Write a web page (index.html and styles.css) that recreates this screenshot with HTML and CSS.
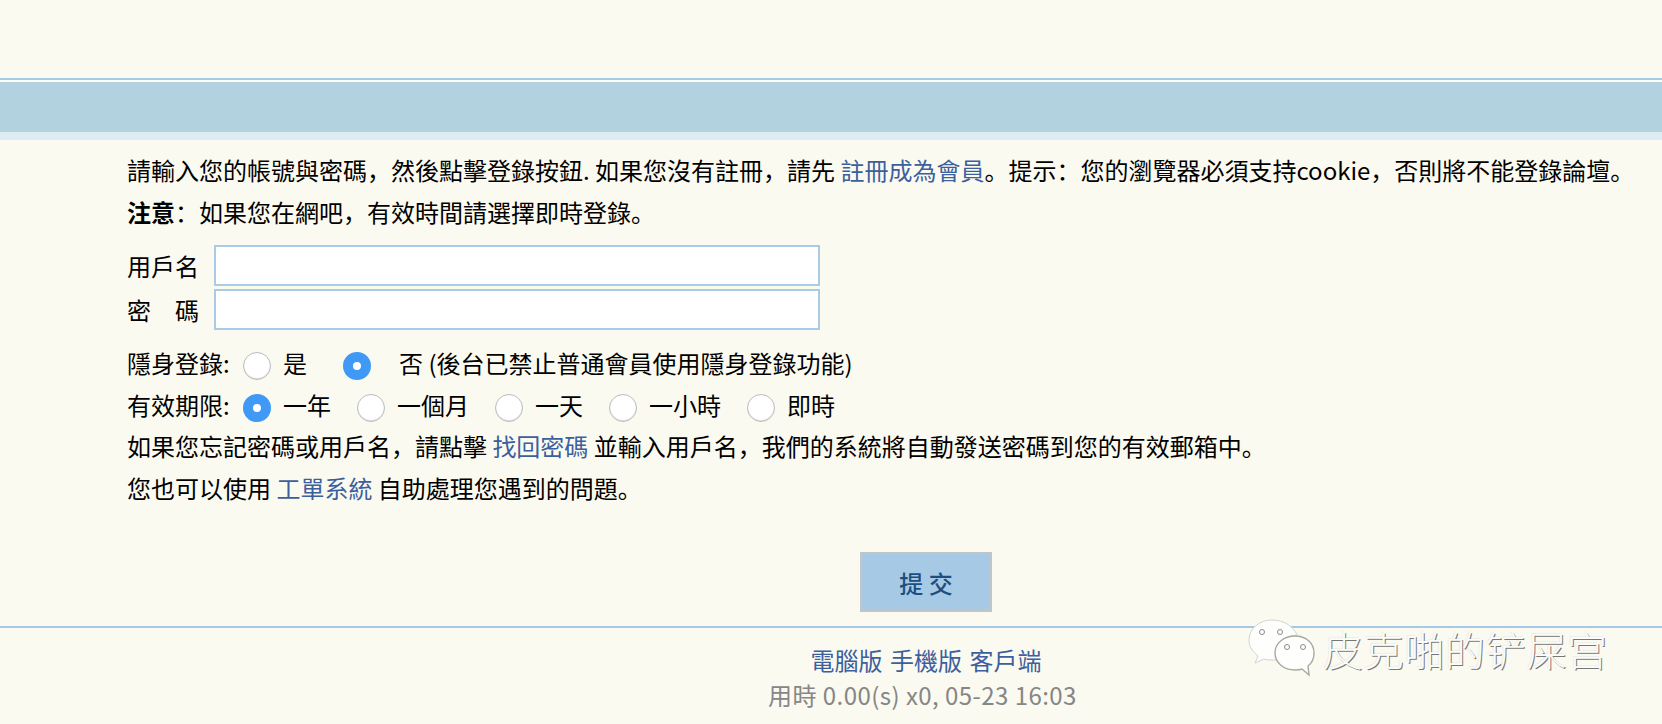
FILE: index.html
```html
<!DOCTYPE html>
<html lang="zh">
<head>
    <meta charset="UTF-8">
    <meta name="viewport" content="width=device-width, initial-scale=1.0">
    <title>登錄</title>
    <link rel="stylesheet" href="styles.css">
</head>
<body>
    <div class="top-bar"><div class="top-band"></div></div>

    <form class="login">
        <p class="line">請輸入您的帳號與密碼，然後點擊登錄按鈕. 如果您沒有註冊，請先 <a href="#">註冊成為會員</a>。提示：您的瀏覽器必須支持cookie，否則將不能登錄論壇。</p>
        <p class="line"><b>注意</b>：如果您在網吧，有效時間請選擇即時登錄。</p>

        <div class="fields">
            <label class="field"><span class="field-name">用戶名</span><input type="text"></label>
            <label class="field"><span class="field-name">密碼</span><input type="password"></label>
        </div>

        <div class="options">
            <span class="options-name">隱身登錄:</span>
            <label class="option option-wide"><input type="radio" name="hide">是</label>
            <label class="option option-far"><input type="radio" name="hide" checked>否 (後台已禁止普通會員使用隱身登錄功能)</label>
        </div>
        <div class="options">
            <span class="options-name">有效期限:</span>
            <label class="option"><input type="radio" name="expire" checked>一年</label>
            <label class="option"><input type="radio" name="expire">一個月</label>
            <label class="option"><input type="radio" name="expire">一天</label>
            <label class="option"><input type="radio" name="expire">一小時</label>
            <label class="option"><input type="radio" name="expire">即時</label>
        </div>

        <p class="line">如果您忘記密碼或用戶名，請點擊 <a href="#">找回密碼</a> 並輸入用戶名，我們的系統將自動發送密碼到您的有效郵箱中。</p>
        <p class="line">您也可以使用 <a href="#">工單系統</a> 自助處理您遇到的問題。</p>

        <div class="submit-row"><button type="button" class="submit">提 交</button></div>
    </form>

    <div class="footer">
        <div class="footer-links"><a href="#">電腦版</a> <a href="#">手機版</a> <a href="#">客戶端</a></div>
        <div class="footer-time">用時 0.00(s) x0, 05-23 16:03</div>
    </div>

    <div class="watermark">
        <svg class="watermark-logo" width="70" height="62" viewBox="0 0 70 62">
            <path d="M26 2C13 2 3 11 3 22c0 7 4 12 9 16l-3 7 9-4c3 1 5 1 8 1 2 0 4 0 5-1-1-2-1-4-1-6 0-10 9-17 21-18C48 9 38 2 26 2z" fill="#fefefc" stroke="#d4d4cf"/>
            <path d="M49 18c-11 0-20 7-20 17s9 17 20 17c2 0 5 0 7-1l7 6-1-9c4-3 6-8 6-13 0-10-8-17-19-17z" fill="#fefefc" stroke="#a9a9a4" stroke-width="1.4"/>
            <circle cx="16" cy="14" r="2.5" fill="#fff" stroke="#8a8a86"/>
            <circle cx="34" cy="14" r="2.5" fill="#fff" stroke="#8a8a86"/>
            <circle cx="41" cy="29" r="2.5" fill="#fff" stroke="#8a8a86"/>
            <circle cx="57" cy="29" r="2.5" fill="#fff" stroke="#8a8a86"/>
        </svg>
        <span class="watermark-text">皮克啪的铲屎宫</span>
    </div>
</body>
</html>
```

FILE: styles.css
```css
* {
    box-sizing: border-box;
}
body {
    position: relative;
    margin: 0;
    height: 724px;
    overflow: hidden;
    font-family: "Noto Sans CJK SC", "Liberation Sans", sans-serif;
    font-size: 24px;
    color: #000;
    background-color: #fbfaf0;
}
a {
    color: #3c5f9e;
    text-decoration: none;
}
p {
    margin: 0;
}
.top-bar {
    margin-top: 78px;
    padding-top: 2px;
    border-top: 2px solid #a6cae6;
    background-color: #fdfdf8;
}
.top-band {
    height: 58px;
    background-color: #b2d2e0;
    border-bottom: 8px solid #deebf2;
}
.login {
    padding: 9px 0 0 127px;
}
.line {
    height: 42px;
    line-height: 42px;
    white-space: nowrap;
}
.fields {
    display: flex;
    flex-direction: column;
    gap: 3px;
    margin: 12px 0 11px;
}
.field {
    display: flex;
    align-items: center;
    gap: 15px;
}
.field-name {
    flex: none;
    width: 72px;
    white-space: nowrap;
    text-align: justify;
    text-align-last: justify;
}
.field input {
    width: 606px;
    height: 41px;
    border: 2px solid #a9cbe6;
    background-color: #fff;
    outline: none;
}
.options {
    display: flex;
    align-items: center;
    height: 42px;
    white-space: nowrap;
}
.options-name {
    width: 116px;
}
.option {
    display: flex;
    align-items: center;
    gap: 12px;
    margin-right: 26px;
}
.option-wide {
    margin-right: 36px;
}
.option-far {
    gap: 28px;
}
.option input {
    appearance: none;
    flex: none;
    width: 28px;
    height: 28px;
    margin: 8px 0 0;
    border: 1px solid #bbb;
    border-radius: 50%;
    background-color: #fff;
    box-shadow: inset 0 -1px 1px #ddd;
}
.option input:checked {
    border: 10px solid #3f99f5;
    box-shadow: none;
}
.submit-row {
    display: flex;
    justify-content: center;
    margin-top: 43px;
    padding-left: 63px;
}
.submit {
    width: 132px;
    height: 60px;
    border: 2px solid #c3c5c4;
    background-color: #a6cae6;
    color: #1c4f80;
    font-family: inherit;
    font-size: 24px;
    font-weight: 500;
}
.footer {
    margin-top: 14px;
    padding: 14px 0 0 190px;
    border-top: 2px solid #a6cae6;
    text-align: center;
    line-height: 35px;
}
.footer-links {
    word-spacing: 2px;
}
.footer-time {
    padding-right: 7px;
    color: #868686;
    letter-spacing: 0.45px;
}
.watermark {
    position: absolute;
    left: 1246px;
    top: 618px;
    display: flex;
    align-items: center;
    gap: 7px;
}
.watermark-text {
    font-size: 40px;
    font-weight: 300;
    letter-spacing: 0.7px;
    color: #fcfcf8;
    text-shadow: 1px 1px 0 #777, -1px -1px 0 #eee;
}
```
